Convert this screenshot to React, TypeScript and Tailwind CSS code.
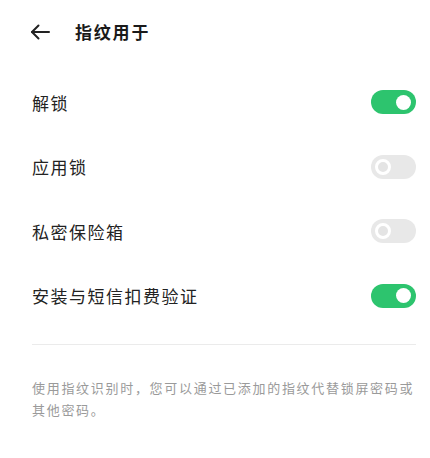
import React, { useState } from 'react';

const font = { fontFamily: '"Noto Sans CJK SC", "Noto Sans", sans-serif' };

interface ToggleProps {
  on: boolean;
  onChange: () => void;
}

const Toggle: React.FC<ToggleProps> = ({ on, onChange }) => {
  return (
    <button
      onClick={onChange}
      className={`relative w-[45px] h-[24px] rounded-full shrink-0 ${on ? 'bg-[#2dc46e]' : 'bg-[#e8e8e8]'}`}
    >
      {on ? (
        <span className="absolute right-[5px] top-[4.5px] w-[15px] h-[15px] rounded-full bg-white" />
      ) : (
        <span className="absolute left-[4px] top-[4px] w-[16px] h-[16px] rounded-full border-[3px] border-white bg-[#e4e4e4]" />
      )}
    </button>
  );
};

const rows = [
  { label: '解锁', on: true },
  { label: '应用锁', on: false },
  { label: '私密保险箱', on: false },
  { label: '安装与短信扣费验证', on: true },
];

export default function App() {
  const [state, setState] = useState(rows.map((r) => r.on));

  return (
    <div className="w-[430px] h-[458px] bg-white overflow-hidden" style={font}>
      <div className="h-[64px] flex items-center pl-[30px]">
        <svg width="20" height="16" viewBox="0 0 20 16" fill="none" stroke="#222" strokeWidth="2" strokeLinecap="round" strokeLinejoin="round">
          <path d="M19 8H2" />
          <path d="M8.5 1.5L2 8l6.5 6.5" />
        </svg>
        <span className="ml-[25px] text-[17px] font-bold text-[#1a1a1a] tracking-[1.8px]">指纹用于</span>
      </div>

      <div className="pt-[6px] pl-[32px] pr-[14px]">
        {rows.map((r, i) => (
          <div key={r.label} className="h-[64.5px] flex items-center justify-between">
            <span className="text-[17px] text-[#222] tracking-[1.5px]">{r.label}</span>
            <Toggle
              on={state[i]}
              onChange={() => setState((s) => s.map((v, j) => (j === i ? !v : v)))}
            />
          </div>
        ))}

        <div className="mt-[16px] h-px bg-[#ebebeb]" />

        <p className="mt-[32px] text-[13px] leading-[22px] text-[#9a9a9a] tracking-[1.7px]">
          使用指纹识别时，您可以通过已添加的指纹代替锁屏密码或其他密码。
        </p>
      </div>
    </div>
  );
}
